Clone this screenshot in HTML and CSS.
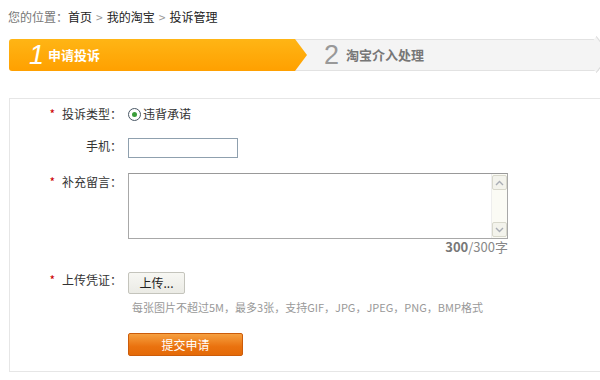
FILE: index.html
```html
<!DOCTYPE html>
<html lang="zh-CN">
<head>
<meta charset="UTF-8">
<title>投诉管理</title>
<link rel="stylesheet" href="styles.css">
</head>
<body>
<div class="crumb"><span class="here">您的位置：</span><a>首页</a><i>&gt;</i><a>我的淘宝</a><i>&gt;</i><a>投诉管理</a></div>

<div class="steps">
    <div class="st on"><b>1</b><span>申请投诉</span></div>
    <div class="st"><b>2</b><span>淘宝介入处理</span></div>
</div>

<div class="box">
    <div class="row r1">
        <label><em>*</em>投诉类型：</label>
        <div class="radio"><span class="dot"></span>违背承诺</div>
    </div>
    <div class="row r2">
        <label>手机：</label>
        <div><input class="ipt" type="text"></div>
    </div>
    <div class="row r3">
        <label><em>*</em>补充留言：</label>
        <div class="ta">
            <div class="ta-in"></div>
            <div class="sb">
                <span><svg width="9" height="6" viewBox="0 0 9 6"><path d="M1 5 4.5 1.5 8 5" fill="none" stroke="#a9adb5" stroke-width="1.4"/></svg></span>
                <span><svg width="9" height="6" viewBox="0 0 9 6"><path d="M1 1 4.5 4.5 8 1" fill="none" stroke="#a9adb5" stroke-width="1.4"/></svg></span>
            </div>
        </div>
    </div>
    <div class="row cnt">
        <label></label>
        <div class="num"><b>300</b>/300字</div>
    </div>
    <div class="row r4">
        <label><em>*</em>上传凭证：</label>
        <div><span class="upl">上传...</span></div>
    </div>
    <div class="row tip">
        <label></label>
        <div>每张图片不超过5M，最多3张，支持GIF，JPG，JPEG，PNG，BMP格式</div>
    </div>
    <div class="row r5">
        <label></label>
        <div><span class="sub">提交申请</span></div>
    </div>
</div>
</body>
</html>
```

FILE: styles.css
```css
*{margin:0;padding:0;box-sizing:border-box}
body{background:#fff;color:#333;font:12px/16px "Noto Sans CJK SC","Liberation Sans",sans-serif;overflow:hidden}

/* breadcrumb */
.crumb{padding:9px 0 0 8px;height:39px;color:#222}
.crumb .here{color:#777}
.crumb a{color:#222}
.crumb i{font-style:normal;color:#999;margin:0 4px}

/* steps */
.steps{display:flex;height:32px;margin-left:9px;width:590px}
.st{display:flex;align-items:center;font-weight:bold;font-size:13px}
.st b{font-size:27px;font-weight:normal;font-style:italic;font-family:"Liberation Sans","Open Sans",sans-serif;margin-right:7px}
.st.on{width:298px;z-index:2;color:#fff;padding-left:20px;border-radius:3px 0 0 3px;background:linear-gradient(#ffb515,#ffa000);clip-path:polygon(0 0,286px 0,298px 50%,286px 100%,0 100%)}
.st.on b{margin-right:4px}
.st:not(.on){flex:1;margin-left:-12px;padding-left:28px;color:#777;background:#f4f4f4;border:1px solid #e2e2e2;border-right:0;position:relative}
.st:not(.on) b{color:#999;font-style:normal}
.st:not(.on)::after{content:'';position:absolute;right:-9px;top:3px;width:22px;height:22px;background:#f4f4f4;border-top:1px solid #dcdcdc;border-right:1px solid #dcdcdc;transform:rotate(45deg) skew(8deg,8deg)}

/* form box */
.box{margin:27px 0 0 9px;width:600px;border:1px solid #e6e6e6;border-right:0;padding:7px 0 15px}
.row{display:grid;grid-template-columns:112px 1fr;column-gap:6px}
.row label{text-align:right;color:#333}
.row label em{font-style:normal;color:#c00;margin-right:7px}
.r2{margin-top:16px}
.r3{margin-top:15px}
.r3 label{padding-top:1px}
.r4{margin-top:17px}
.tip{margin-top:5px;color:#999;font-size:11px}
.tip div{padding-left:4px}
.r5{margin-top:18px}

.radio{display:flex;align-items:center;color:#333}
.dot{width:13px;height:13px;border:1px solid #4a5866;border-radius:50%;margin-right:2px;display:flex;align-items:center;justify-content:center;background:#fff}
.dot::after{content:'';width:5px;height:5px;border-radius:50%;background:#3a9d3a}

.ipt{width:110px;height:20px;border:1px solid #8fa0ae;outline:0;display:block}

.ta{width:380px;height:66px;border:1px solid #a8a8a8;border-top-color:#999;display:flex;background:#fff}
.ta-in{flex:1}
.sb{width:16px;background:#fbfbf5;border-left:1px solid #eee;display:flex;flex-direction:column;justify-content:space-between;padding:1px 0}
.sb span{height:15px;width:15px;border:1px solid #d8d8cc;border-radius:2px;background:#f3f3ec;display:flex;align-items:center;justify-content:center}

.num{width:380px;text-align:right;color:#888;font-size:13px;line-height:16px}
.num b{color:#777}

.upl{display:inline-block;width:57px;height:22px;line-height:20px;text-align:center;border:1px solid #c4c4bc;border-radius:2px;background:linear-gradient(#f7f7f3,#ebebe5);color:#222}

.sub{display:inline-block;width:115px;height:23px;line-height:21px;text-align:center;color:#fff;border:1px solid #cc5c0a;border-radius:2px;background:linear-gradient(#f6a040,#ea720f 60%,#e46a08);font-size:12px}
```
